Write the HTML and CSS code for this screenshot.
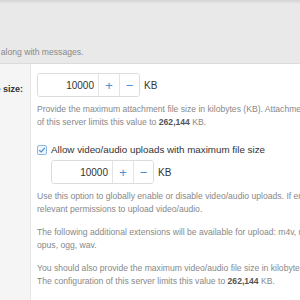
FILE: index.html
```html
<!DOCTYPE html>
<html lang="en">
<head>
  <meta charset="UTF-8">
  <title>Attachments | Settings</title>
  <link rel="stylesheet" href="styles.css">
</head>
<body>
  <div class="settings-page">
    <!-- Section intro -->
    <div class="section-band">
      <p class="band-hint">Users can send files along with messages.</p>
    </div>

    <!-- Max file size row -->
    <div class="setting-row">
      <div class="row-label">Maximum file size:</div>
      <div class="row-body">
        <div class="size-line">
          <div class="spinner">
            <input class="spinner-value" type="text" value="10000">
            <button class="spinner-btn">+</button>
            <button class="spinner-btn">&minus;</button>
          </div>
          <span class="unit">KB</span>
        </div>
        <p class="help">Provide the maximum attachment file size in kilobytes (KB). Attachments larger than this are rejected. The configuration<br>of this server limits this value to <b>262,144</b> KB.</p>

        <label class="check-line">
          <span class="check-box">
            <svg width="8" height="8" viewBox="0 0 8 8"><path d="M1.2 4.2 L3.2 6 L6.8 1.8" fill="none" stroke="#4a90d9" stroke-width="1.2"/></svg>
          </span>
          Allow video/audio uploads with maximum file size
        </label>
        <div class="size-line indented">
          <div class="spinner">
            <input class="spinner-value" type="text" value="10000">
            <button class="spinner-btn">+</button>
            <button class="spinner-btn">&minus;</button>
          </div>
          <span class="unit">KB</span>
        </div>
        <p class="help">Use this option to globally enable or disable video/audio uploads. If enabled, users still need the<br>relevant permissions to upload video/audio.</p>
        <p class="help">The following additional extensions will be available for upload: m4v, mp4, webm, mp3,<br>opus, ogg, wav.</p>
        <p class="help">You should also provide the maximum video/audio file size in kilobytes (KB).<br>The configuration of this server limits this value to <b>262,144</b> KB.</p>
      </div>
    </div>
  </div>
</body>
</html>
```
FILE: styles.css
```css
* {
  margin: 0;
  padding: 0;
  box-sizing: border-box;
}

body {
  font-family: "Liberation Sans", Arial, sans-serif;
  background: #fff;
  overflow: hidden;
  width: 300px;
  height: 300px;
}

.settings-page {
  margin-left: -120px;
  width: 640px;
}

/* Intro band */
.section-band {
  height: 64px;
  background: linear-gradient(#d4d4d4, #e9e9e9 4px);
  border-bottom: 1px solid #dcdcdc;
  padding: 47px 0 0 41px;
}

.band-hint {
  font-size: 8.6px;
  color: #888;
}

/* Setting rows */
.setting-row {
  display: flex;
  min-height: 240px;
}

.row-label {
  width: 151px;
  background: #f5f5f5;
  border-right: 1px solid #e6e6e6;
  text-align: right;
  padding: 20px 7px 0 0;
  font-size: 9px;
  font-weight: bold;
  color: #333;
}

.row-body {
  padding: 9px 0 0 6px;
  flex: 1;
}

.size-line {
  display: flex;
  align-items: center;
  gap: 4px;
}

.size-line.indented {
  margin-left: 14px;
  margin-top: 5px;
}

.spinner {
  display: flex;
  height: 24px;
  border: 1px solid #dcdcdc;
  border-radius: 3px;
  overflow: hidden;
}

.spinner-value {
  width: 61px;
  border: none;
  border-right: 1px solid #e4e4e4;
  padding: 0 4px;
  text-align: right;
  font-family: inherit;
  font-size: 10px;
  color: #333;
  background: #fff;
  outline: none;
}

.spinner-btn {
  width: 20px;
  border: none;
  background: #fff;
  color: #4a90d9;
  font-family: inherit;
  font-size: 13px;
}

.spinner-btn + .spinner-btn {
  border-left: 1px solid #e4e4e4;
}

.unit {
  font-size: 10px;
  color: #333;
}

.help {
  font-size: 8.6px;
  line-height: 13px;
  color: #888;
  margin-top: 6px;
  white-space: nowrap;
}

.help + .help {
  margin-top: 10px;
}

.help b {
  color: #555;
}

.check-line {
  display: flex;
  align-items: center;
  gap: 4px;
  margin-top: 15px;
  font-size: 9.8px;
  color: #333;
}

.check-box {
  width: 10px;
  height: 10px;
  border: 1px solid #8fb8e3;
  border-radius: 2px;
  background: #eef5fc;
  display: flex;
  align-items: center;
  justify-content: center;
}
```
